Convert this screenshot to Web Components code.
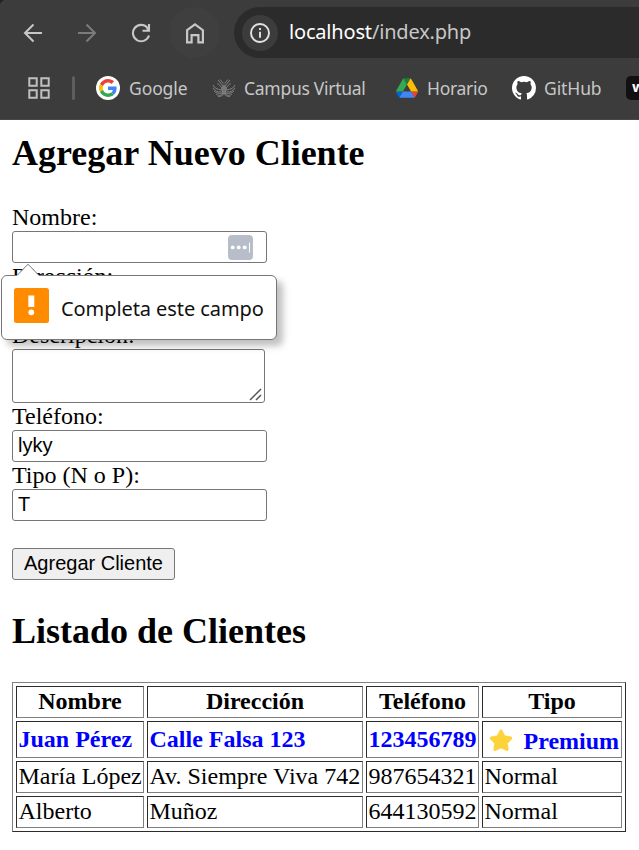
<!DOCTYPE html>
<html lang="es">
<head>
<meta charset="utf-8">
<title>Clientes</title>
<style>
body{margin:0;background:#fff;color:#000;font:24px/27px "Liberation Serif",serif;overflow:hidden}
</style>
</head>
<body>
<browser-chrome></browser-chrome>
<clients-page></clients-page>
<script>
const define=(name,html)=>customElements.define(name,class extends HTMLElement{
  connectedCallback(){
    if(this.shadowRoot)return;
    const t=document.createElement('template');
    t.innerHTML=typeof html==='function'?html(this):html;
    this.attachShadow({mode:'open'}).append(t.content.cloneNode(true));
  }
});

const icons={
back:`<svg width="20" height="20" viewBox="0 0 20 20" fill="none" stroke="#c7c7c7" stroke-width="2"><path d="M19 10H2.500M10.500 1.500 2 10l8.500 8.500"/></svg>`,
forward:`<svg width="20" height="20" viewBox="0 0 20 20" fill="none" stroke="#7b7b7b" stroke-width="2"><path d="M1 10h16.500M9.500 1.500 18 10l-8.500 8.500"/></svg>`,
reload:`<svg width="20" height="20" viewBox="0 0 20 20" fill="none" stroke="#c7c7c7" stroke-width="2.100"><path d="M16.300 4.600A8.200 8.200 0 1 0 18 12.500M18 1v6.800h-6.500M17.500 7 15 3.500"/></svg>`,
home:`<svg width="20" height="22" viewBox="0 0 20 22" fill="none" stroke="#c7c7c7" stroke-width="2.200"><path d="M2.100 8.200 10 2.300l7.900 5.900v12.200h-4.500v-7.300H6.600v7.300H2.100z"/></svg>`,
info:`<svg width="20" height="20" viewBox="0 0 20 20" fill="none" stroke="#e3e3e3" stroke-width="1.900"><circle cx="10" cy="10" r="9"/><path d="M10 8.800v6M10 5v2"/></svg>`,
grid:`<svg width="22" height="22" viewBox="0 0 22 22" fill="none" stroke="#c0c0c0" stroke-width="2"><path d="M1.300 1.300h7.400v7.400H1.300zM13.300 1.300h7.400v7.400h-7.400zM1.300 13.300h7.400v7.400H1.300zM13.300 13.300h7.400v7.400h-7.400z"/></svg>`,
google:`<svg width="24" height="24" viewBox="-8 -8 64 64"><circle cx="24" cy="24" r="32" fill="#fff"/><path fill="#EA4335" d="M24 9.500c3.540 0 6.710 1.220 9.210 3.600l6.850-6.850C35.900 2.380 30.470 0 24 0 14.620 0 6.510 5.380 2.560 13.220l7.980 6.190C12.430 13.720 17.740 9.500 24 9.500z"/><path fill="#4285F4" d="M46.980 24.550c0-1.570-.15-3.090-.38-4.550H24v9.020h12.940c-.58 2.960-2.260 5.480-4.780 7.180l7.730 6c4.510-4.180 7.090-10.360 7.090-17.650z"/><path fill="#FBBC05" d="M10.530 28.590A14.500 14.500 0 0 1 9.770 24c0-1.600.27-3.140.76-4.590l-7.980-6.190A24 24 0 0 0 0 24c0 3.880.92 7.540 2.560 10.780z"/><path fill="#34A853" d="M24 48c6.480 0 11.930-2.130 15.890-5.810l-7.730-6C30 37.640 27.240 38.490 24 38.490c-6.260 0-11.570-4.220-13.470-9.910l-7.980 6.190C6.510 42.620 14.620 48 24 48z"/></svg>`,
campus:`<svg width="24" height="24" viewBox="0 0 24 24" fill="none" stroke="#858585" stroke-width=".95"><path d="M6 4l5 6M5.500 7l5.500 6M8 3.500l3.500 4M18 4l-5 6M18.500 7 13 13M16 3.500 12.500 7.500M1 9c1 3 4 4 8 5M1 12c2 3 4 4 8 4M2 15c2 2 4 3 8 2M4 18c2 2 5 2 7-1M6 20.500c3 0 5-1 6-3M23 9c-1 3-4 4-8 5M23 12c-2 3-4 4-8 4M22 15c-2 2-4 3-8 2M20 18c-2 2-5 2-7-1M18 20.500c-3 0-5-1-6-3"/><path d="M12 9l2.500 3.500-1 5h-3l-1-5z" fill="#777"/></svg>`,
drive:`<svg width="22" height="20" viewBox="0 0 87.300 78"><path fill="#0066da" d="m6.600 66.850 3.850 6.650c.8 1.400 1.950 2.500 3.300 3.300L27.500 53H0c0 1.550.4 3.100 1.200 4.500z"/><path fill="#34a853" d="M43.650 25 29.900 1.200c-1.350.8-2.500 1.900-3.300 3.300L1.200 48.500A9 9 0 0 0 0 53h27.500z"/><path fill="#ea4335" d="M73.550 76.800c1.350-.8 2.500-1.900 3.300-3.300l1.600-2.750L86.100 57.500c.8-1.400 1.200-2.950 1.200-4.500H59.800l5.850 11.500z"/><path fill="#188038" d="M43.650 25 57.400 1.200C56.050.4 54.500 0 52.900 0H34.400c-1.600 0-3.150.45-4.500 1.200z"/><path fill="#4285f4" d="M59.800 53H27.500L13.750 76.800c1.350.8 2.900 1.200 4.500 1.200h50.800c1.600 0 3.150-.45 4.500-1.200z"/><path fill="#fbbc04" d="m73.400 26.500-12.700-22c-.8-1.400-1.950-2.500-3.300-3.300L43.650 25 59.800 53h27.450c0-1.550-.4-3.100-1.200-4.500z"/></svg>`,
github:`<svg width="24" height="24" viewBox="0 0 16 16" fill="#fff"><path d="M8 0C3.580 0 0 3.580 0 8c0 3.540 2.290 6.530 5.470 7.590.4.070.55-.17.55-.38 0-.19-.01-.82-.01-1.490-2.010.37-2.530-.49-2.690-.94-.09-.23-.48-.94-.82-1.130-.28-.15-.68-.52-.01-.53.63-.01 1.080.58 1.230.82.72 1.210 1.870.87 2.330.66.070-.52.28-.87.51-1.070-1.780-.2-3.640-.89-3.640-3.950 0-.87.31-1.590.82-2.150-.08-.2-.36-1.020.08-2.120 0 0 .67-.21 2.200.82a7.600 7.600 0 0 1 4 0c1.530-1.040 2.200-.82 2.200-.82.44 1.100.16 1.920.08 2.120.51.56.82 1.270.82 2.150 0 3.070-1.870 3.750-3.650 3.950.29.25.54.73.54 1.480 0 1.070-.01 1.930-.01 2.200 0 .21.15.46.55.38A8.010 8.010 0 0 0 16 8c0-4.420-3.580-8-8-8z"/></svg>`,
star:`<svg width="26" height="24" viewBox="0 0 26 24"><path d="M13 3.200 15.800 8.800 22.600 10.100 18 14.900 19 21.300 13 18.600 7 21.300 8 14.900 3.400 10.100 10.200 8.800z" fill="#fdd33c" stroke="#fdd33c" stroke-width="3.200" stroke-linejoin="round"/></svg>`,
alert:`<svg width="35" height="35" viewBox="0 0 35 35"><rect width="35" height="35" rx="2.500" fill="#ff8c00"/><path d="M14.300 7.500h6v11.500h-6z" fill="#fff"/><circle cx="17.300" cy="24.300" r="2.900" fill="#fff"/></svg>`,
keys:`<svg width="25" height="25" viewBox="0 0 25 25"><rect width="25" height="25" rx="4" fill="#b8bec9"/><g fill="#fff"><circle cx="4.700" cy="12.400" r="1.900"/><circle cx="10.700" cy="12.400" r="1.900"/><circle cx="16.700" cy="12.400" r="1.900"/><path d="M21 7.500h1v10h-1z"/></g></svg>`
};
define('ui-icon',el=>`<style>:host{display:flex;flex:none}svg{display:block}</style>${icons[el.getAttribute('name')]}`);

define('bookmark-item',`<style>:host{display:flex;align-items:center;flex:none;height:24px;color:#c7c7c7;font:17.500px/24px "Noto Sans",sans-serif;white-space:nowrap}
span{margin-left:var(--gap,9px);letter-spacing:var(--ls,-.1px)}</style><slot name="icon"></slot><span><slot></slot></span>`);

define('browser-chrome',`<style>
:host{display:block;height:120px;box-sizing:border-box;background:radial-gradient(circle at 7px 7px,#3c3c3c 7px,#222 8px) 0 0/7px 7px no-repeat,linear-gradient(#3c3c3c,#3c3c3c) 7px 0 no-repeat,linear-gradient(#3c3c3c,#3c3c3c) 0 7px no-repeat;border-bottom:1px solid #4a4649;overflow:hidden}
.bar{display:flex;align-items:center;height:51px;padding:7px 0 0 23px}
.bar>ui-icon{width:20px;margin-right:34px}
.home{display:flex;align-items:center;justify-content:center;flex:none;width:51px;height:51px;border-radius:50%;background:#3f3f3f;margin-left:-16px}
.address{display:flex;align-items:center;flex:1;height:51px;margin-left:14px;background:#2b2b2b;border-radius:26px 0 0 26px}
.info{display:flex;align-items:center;justify-content:center;width:36px;height:36px;border-radius:50%;background:#3c3c3c;margin-left:8px}
.url{margin-left:11px;font:20px/30px "Noto Sans",sans-serif;color:#c7c7c7;letter-spacing:-.18px;white-space:nowrap;padding-bottom:1px}b{font-weight:400;color:#fff}
.marks{display:flex;align-items:center;height:60px;padding:0 0 0 28px}
i{flex:none;width:3px;height:24px;border-radius:2px;background:#5e5e5e;margin:0 21px 0 22px}
.tile{flex:none;width:24px;height:24px;margin-left:25px;border-radius:5px;background:#111;color:#fff;font:bold 15px/21px "Noto Sans",sans-serif;text-indent:6px}
</style>
<div class="bar"><ui-icon name="back"></ui-icon><ui-icon name="forward"></ui-icon><ui-icon name="reload"></ui-icon><div class="home"><ui-icon name="home"></ui-icon></div>
<div class="address"><div class="info"><ui-icon name="info"></ui-icon></div><div class="url"><b>localhost</b>/index.php</div></div></div>
<div class="marks"><ui-icon name="grid"></ui-icon><i></i>
<bookmark-item style="width:91px"><ui-icon slot="icon" name="google"></ui-icon>Google</bookmark-item>
<bookmark-item style="width:153px;margin-left:25px;--gap:8px;--ls:-.28px"><ui-icon slot="icon" name="campus"></ui-icon>Campus Virtual</bookmark-item>
<bookmark-item style="width:92px;margin-left:31px;--ls:-.3px"><ui-icon slot="icon" name="drive"></ui-icon>Horario</bookmark-item>
<bookmark-item style="width:89px;margin-left:24px;--gap:8px"><ui-icon slot="icon" name="github"></ui-icon>GitHub</bookmark-item>
<div class="tile">w</div></div>`);

define('form-field',el=>{
 const area=el.hasAttribute('area');
 return `<style>:host{display:block}label{display:block;height:27px;line-height:27px}
.box{display:flex;align-items:center;justify-content:flex-end;box-sizing:border-box;width:255px;height:32px;border:1px solid #767676;border-radius:3px;background:#fff;padding:0 13px 0 5px;font:20px/28px "Liberation Sans",sans-serif}
.box span{flex:1;padding-bottom:2px}
.area{width:253px;height:54px;align-items:flex-end;padding:0 2px 1px}
</style><label>${el.getAttribute('label')}</label><div class="box ${area?'area':''}"><span>${el.getAttribute('value')||''}</span><slot></slot>${area?'<svg width="13" height="13" viewBox="0 0 13 13" fill="none" stroke="#555" stroke-width="1.500"><path d="M1 12 12 1M7 12l5-5"/></svg>':''}</div>`});

define('action-button',`<style>:host{display:flex;align-items:center;justify-content:center;box-sizing:border-box;width:163px;height:32px;border:1px solid #767676;border-radius:3px;background:#efefef;font:20px/28px "Liberation Sans",sans-serif;padding-bottom:2px;white-space:nowrap}</style><slot></slot>`);

define('validation-tip',`<style>:host{position:absolute;left:1px;top:155px;display:flex;align-items:center;box-sizing:border-box;width:276px;height:65px;border:1px solid #767676;border-radius:6px;background:#fff;padding:0 0 5px 12px;box-shadow:6px 6px 7px rgba(0,0,0,.25);font:20px/30px "Noto Sans",sans-serif;color:#111;white-space:nowrap}
svg.tip{position:absolute;left:14px;top:-13px}
span{margin:7px 0 0 12px;letter-spacing:-.08px}</style><svg class="tip" width="24" height="14" viewBox="0 0 24 14"><path d="M0 14 1 12.500 12 1.200 23 12.500 24 14z" fill="#fff"/><path d="M1 12.500 12 1.200 23 12.500" fill="none" stroke="#767676"/></svg><ui-icon name="alert"></ui-icon><span><slot></slot></span>`);

define('client-table',`<style>:host{display:block}
table{table-layout:fixed;width:614px;height:150px;border:1px solid;border-color:#808080 #2c2c2c #2c2c2c #808080;border-spacing:3px;border-collapse:separate}
th,td{box-sizing:border-box;border:1px solid;border-color:#2c2c2c #808080 #808080 #2c2c2c;padding:0 1.500px 1px;height:32px;text-align:left;line-height:27px;white-space:nowrap}
th{text-align:center}.premium td{height:37px;color:#00f;font-weight:bold;padding-bottom:0}
.kind{display:flex;align-items:center;padding-left:3px}.kind span{margin-left:10px;padding-top:3px}</style>
<table><colgroup><col style="width:128px"><col style="width:216px"><col style="width:113px"><col style="width:140px"></colgroup>
<tr><th>Nombre</th><th>Dirección</th><th>Teléfono</th><th>Tipo</th></tr>
<tr class="premium"><td>Juan Pérez</td><td>Calle Falsa 123</td><td>123456789</td><td><div class="kind"><ui-icon name="star"></ui-icon><span>Premium</span></div></td></tr>
<tr><td>María López</td><td>Av. Siempre Viva 742</td><td>987654321</td><td>Normal</td></tr>
<tr><td>Alberto</td><td>Muñoz</td><td>644130592</td><td>Normal</td></tr></table>`);

define('clients-page',`<style>:host{display:block;position:relative;padding:13px 12px 0}
h2{font-size:36px;line-height:41px;height:41px;margin:0 0 30px}
h2.list{margin:31px 0 30px}action-button{margin-top:27px}</style>
<h2>Agregar Nuevo Cliente</h2>
<form-field label="Nombre:"><ui-icon name="keys"></ui-icon></form-field>
<form-field label="Dirección:"></form-field>
<form-field label="Descripción:" area></form-field>
<form-field label="Teléfono:" value="lyky"></form-field>
<form-field label="Tipo (N o P):" value="T"></form-field>
<action-button>Agregar Cliente</action-button>
<h2 class="list">Listado de Clientes</h2>
<client-table></client-table>
<validation-tip>Completa este campo</validation-tip>`);
</script>
</body>
</html>
